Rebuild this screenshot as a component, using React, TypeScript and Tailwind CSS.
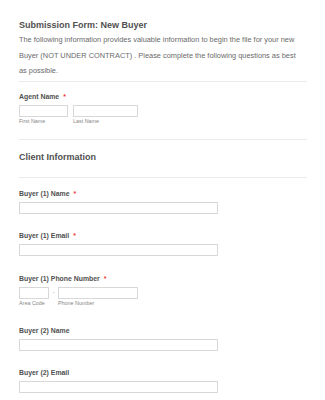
import React from "react";

function Label({ text, required }: { text: string; required?: boolean }) {
  return (
    <div className="flex items-center text-[6.9px] font-bold leading-[10px] text-[#505050]">
      {text}
      {required && <span className="ml-[4px] text-[#e33]">*</span>}
    </div>
  );
}

function Input({ className }: { className: string }) {
  return <div className={"h-[12px] border border-[#d8d8d8] bg-white " + className} />;
}

function Divider({ className }: { className: string }) {
  return <div className={"h-px w-[288px] bg-[#ececec] " + className} />;
}

export default function App() {
  return (
    <div className="min-h-[400px] w-[325px] bg-white pl-[19px] pt-[18px] font-['Liberation_Sans',Arial,sans-serif]">
      <h1 className="text-[9px] font-bold leading-[14px] text-[#505050]">Submission Form: New Buyer</h1>
      <p className="w-[280px] text-[7.4px] leading-[15.5px] text-[#6a6a6a]">
        The following information provides valuable information to begin the file for your new Buyer (NOT UNDER
        CONTRACT) . Please complete the following questions as best as possible.
      </p>
      <Divider className="mt-[2px]" />

      <div className="mt-[10px]">
        <Label text="Agent Name" required />
        <div className="mt-[3px] flex gap-[5px]">
          <div className="flex flex-col">
            <Input className="w-[49px]" />
            <span className="text-[5.4px] leading-[8px] text-[#888]">First Name</span>
          </div>
          <div className="flex flex-col">
            <Input className="w-[65px]" />
            <span className="text-[5.4px] leading-[8px] text-[#888]">Last Name</span>
          </div>
        </div>
      </div>
      <Divider className="mt-[14px]" />

      <h2 className="mt-[10px] text-[9px] font-bold leading-[14px] text-[#505050]">Client Information</h2>
      <Divider className="mt-[13px]" />

      <div className="mt-[11px]">
        <Label text="Buyer (1) Name" required />
        <Input className="mt-[3px] w-[199px]" />
      </div>

      <div className="mt-[17px]">
        <Label text="Buyer (1) Email" required />
        <Input className="mt-[3px] w-[199px]" />
      </div>

      <div className="mt-[18px]">
        <Label text="Buyer (1) Phone Number" required />
        <div className="mt-[3px] flex">
          <div className="flex flex-col">
            <Input className="w-[30px]" />
            <span className="text-[5.4px] leading-[8px] text-[#888]">Area Code</span>
          </div>
          <div className="flex h-[12px] w-[9px] items-center justify-center text-[6px] text-[#888]">-</div>
          <div className="flex flex-col">
            <Input className="w-[80px]" />
            <span className="text-[5.4px] leading-[8px] text-[#888]">Phone Number</span>
          </div>
        </div>
      </div>

      <div className="mt-[19px]">
        <Label text="Buyer (2) Name" />
        <Input className="mt-[3px] w-[199px]" />
      </div>

      <div className="mt-[17px]">
        <Label text="Buyer (2) Email" />
        <Input className="mt-[3px] w-[199px]" />
      </div>
    </div>
  );
}
